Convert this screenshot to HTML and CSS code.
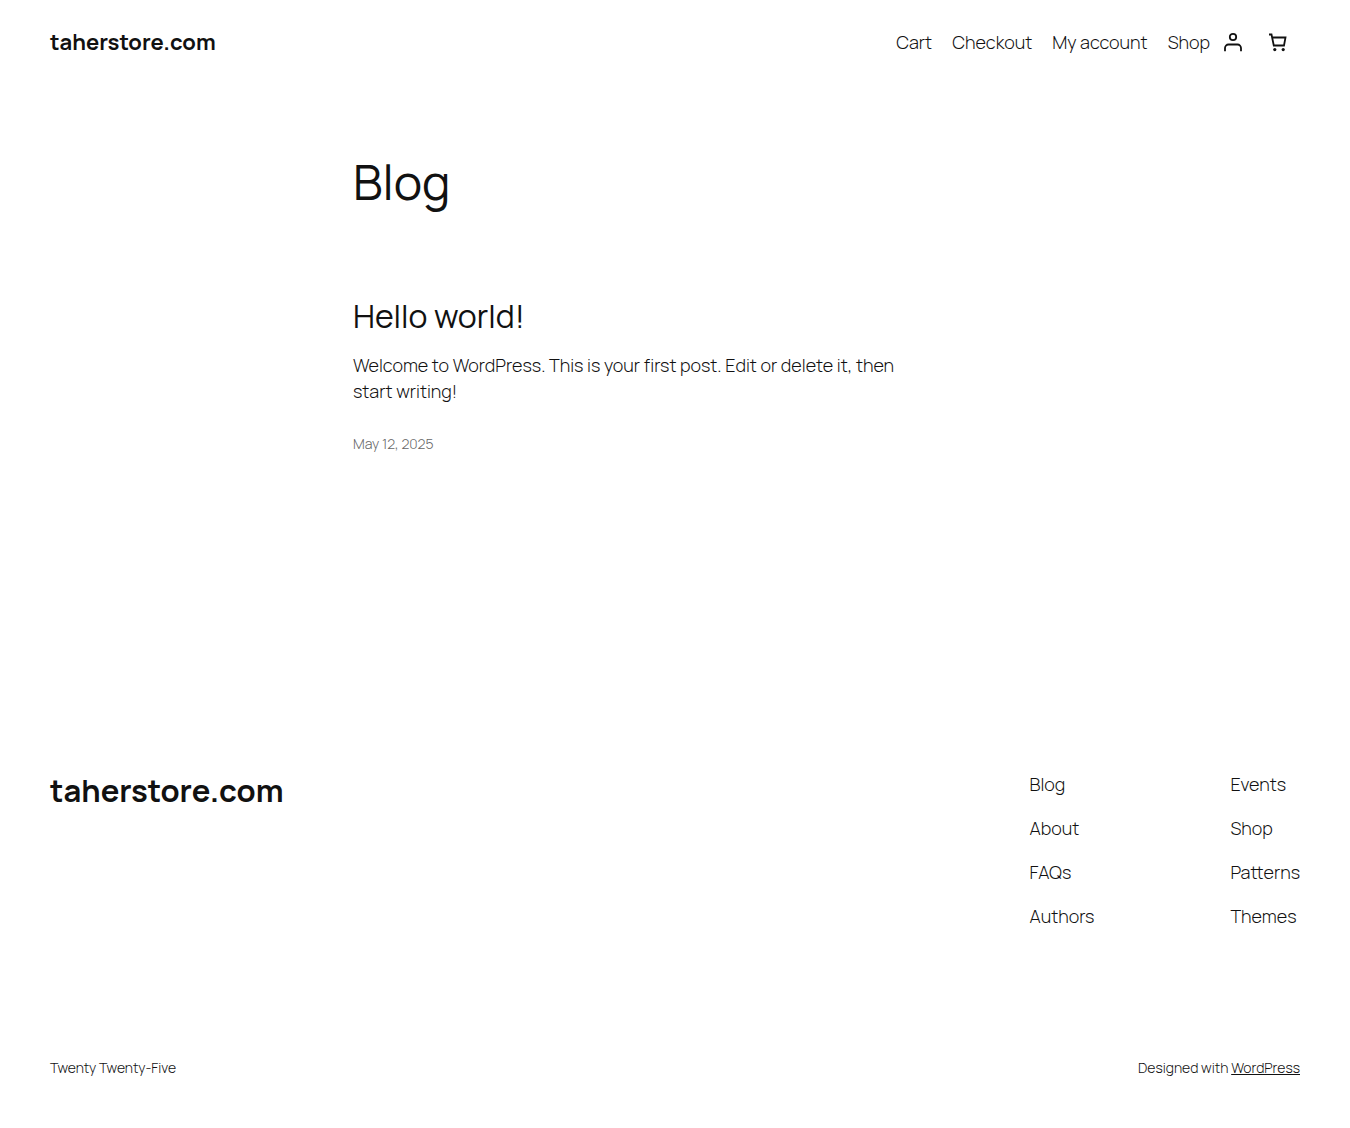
FILE: index.html
```html
<!DOCTYPE html>
<html lang="en">
<head>
    <meta charset="UTF-8">
    <meta name="viewport" content="width=device-width, initial-scale=1.0">
    <title>Blog - taherstore.com</title>
    <link rel="stylesheet" href="styles.css">
</head>
<body>
    <header class="site-header">
        <a class="site-title" href="#">taherstore.com</a>
        <div class="header-right">
            <nav class="main-nav">
                <a href="#">Cart</a>
                <a href="#">Checkout</a>
                <a href="#">My account</a>
                <a href="#">Shop</a>
            </nav>
            <a class="account-link" href="#" aria-label="Login">
                <svg width="18" height="20" viewBox="0 0 18 20" fill="none" stroke="currentColor" stroke-width="1.8">
                    <circle cx="9" cy="5" r="3.2"/>
                    <path d="M1 19.2v-3.2a3.5 3.5 0 0 1 3.5-3.5h9a3.5 3.5 0 0 1 3.5 3.5v3.2"/>
                </svg>
            </a>
            <button class="cart-button" type="button" aria-label="Cart">
                <svg width="20" height="20" viewBox="0 0 20 20" fill="none" stroke="currentColor" stroke-width="1.8">
                    <path d="M1 2.5h2.5l2.3 11h10.2l1.5-8H4.2"/>
                    <circle cx="6.8" cy="17.6" r="1.6" fill="currentColor" stroke="none"/>
                    <circle cx="15.2" cy="17.6" r="1.6" fill="currentColor" stroke="none"/>
                </svg>
            </button>
        </div>
    </header>

    <main class="content">
        <h1>Blog</h1>
        <article class="post">
            <h2><a href="#">Hello world!</a></h2>
            <p>Welcome to WordPress. This is your first post. Edit or delete it, then start writing!</p>
            <a class="post-date" href="#"><time datetime="2025-05-12">May 12, 2025</time></a>
        </article>
    </main>

    <footer class="site-footer">
        <div class="footer-top">
            <a class="footer-title" href="#">taherstore.com</a>
            <div class="footer-menus">
                <nav class="footer-nav">
                    <a href="#">Blog</a>
                    <a href="#">About</a>
                    <a href="#">FAQs</a>
                    <a href="#">Authors</a>
                </nav>
                <nav class="footer-nav">
                    <a href="#">Events</a>
                    <a href="#">Shop</a>
                    <a href="#">Patterns</a>
                    <a href="#">Themes</a>
                </nav>
            </div>
        </div>
        <div class="footer-bottom">
            <p>Twenty Twenty-Five</p>
            <p>Designed with <a href="#">WordPress</a></p>
        </div>
    </footer>
</body>
</html>
```
FILE: styles.css
```css
* {
    box-sizing: border-box;
}

body {
    margin: 0;
    color: #111111;
    background-color: #FFFFFF;
    font-family: Manrope, Inter, sans-serif;
    font-size: 18px;
    font-weight: 300;
    line-height: 26px;
}

a {
    color: inherit;
    text-decoration: none;
}

h1, h2, p {
    margin: 0;
    font-weight: 400;
}

p {
    font-weight: 300;
}

.site-header {
    display: flex;
    align-items: center;
    justify-content: space-between;
    padding: 20px 50px;
}

.site-title {
    font-size: 22px;
    font-weight: 700;
}

.header-right {
    display: flex;
    align-items: center;
    gap: 9px;
}

.main-nav {
    display: flex;
    gap: 20px;
}

.account-link {
    display: flex;
    padding: 5px;
}

.cart-button {
    display: flex;
    padding: 12px;
    border: none;
    background: none;
    color: inherit;
    cursor: pointer;
}

.content {
    max-width: 644px;
    margin: 0 auto;
    padding-top: 70px;
}

h1 {
    font-size: 48px;
    line-height: 56px;
}

.post {
    padding-top: 88px;
}

h2 {
    font-size: 32px;
    line-height: 36px;
}

.post p {
    max-width: 560px;
    margin-top: 18px;
}

.post-date {
    display: block;
    margin-top: 29px;
    color: #666666;
    font-size: 14px;
    line-height: 22px;
}

.site-footer {
    padding: 316px 50px 48px;
}

.footer-top {
    display: flex;
    justify-content: space-between;
}

.footer-title {
    font-size: 31px;
    font-weight: 700;
    line-height: 38px;
}

.footer-menus {
    display: flex;
    gap: 136px;
}

.footer-nav {
    display: flex;
    flex-direction: column;
    gap: 18px;
}

.footer-bottom {
    display: flex;
    justify-content: space-between;
    padding-top: 128px;
    font-size: 14px;
    line-height: 22px;
}

.footer-bottom a {
    text-decoration: underline;
}
```
